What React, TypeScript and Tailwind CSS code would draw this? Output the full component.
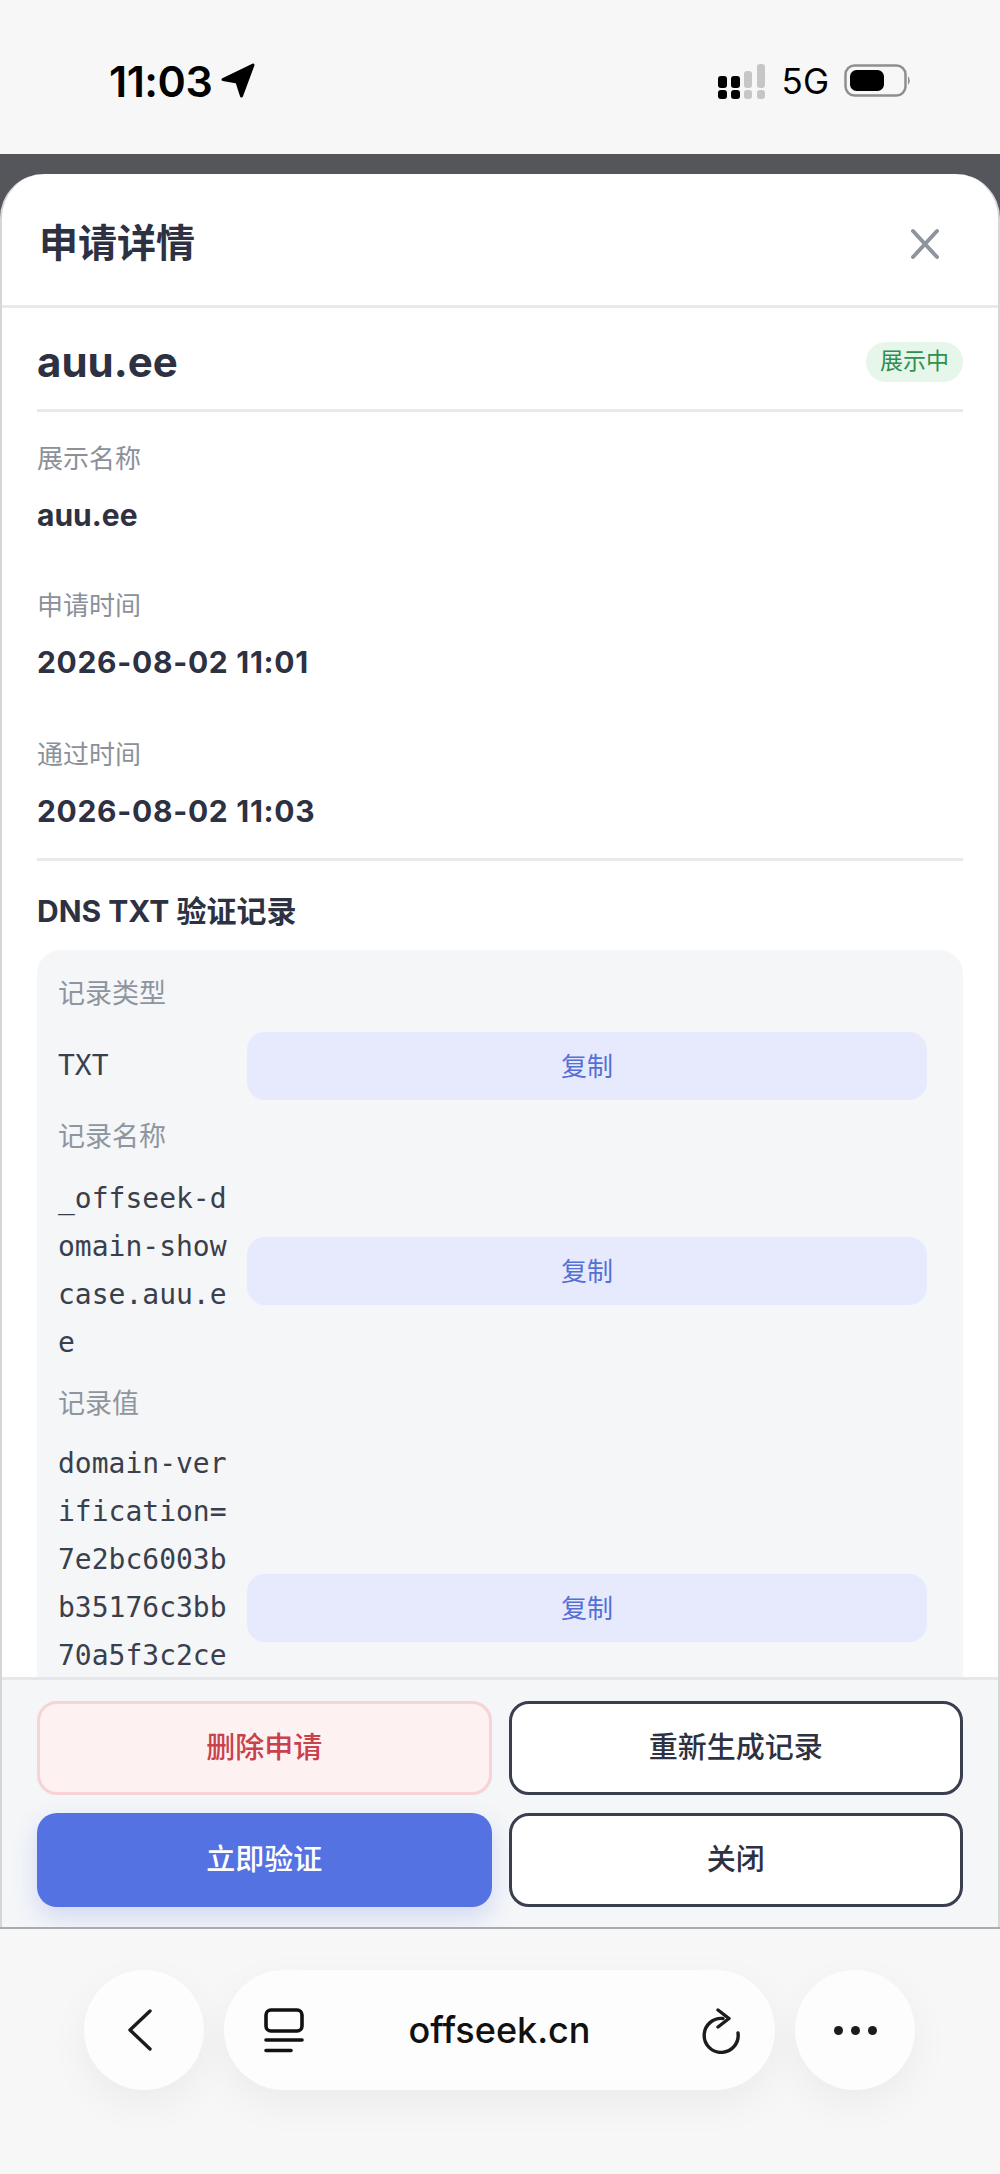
const SANS = "font-['Inter','Noto_Sans_CJK_SC',sans-serif]";

function Info({ label, value, cls, valueCls }: { label: string; value: string; cls: string; valueCls: string }) {
  return (
    <div className={cls}>
      <div className="text-[26px] leading-[36px] text-[#8b9099]">{label}</div>
      <div className={`mt-[20px] text-[30px] leading-[36px] font-bold text-[#2d3142] ${valueCls}`}>{value}</div>
    </div>
  );
}

function RecordRow({ label, lines, rowCls, minH }: { label: string; lines: string[]; rowCls: string; minH: string }) {
  return (
    <div>
      <div className="text-[27px] leading-[36px] text-[#8f959e]">{label}</div>
      <div className={`flex items-center ${rowCls}`}>
        <div className={`w-[189px] shrink-0 font-['DejaVu_Sans_Mono',monospace] text-[28px] leading-[48px] text-[#3a3f4d] ${minH}`}>
          {lines.map((l) => (
            <div key={l}>{l}</div>
          ))}
        </div>
        <button className="h-[68px] w-[680px] rounded-[18px] bg-[#e7eafd] text-[26px] text-[#5470d6]">复制</button>
      </div>
    </div>
  );
}

export default function App() {
  return (
    <div className={`flex h-[2174px] w-[1000px] flex-col overflow-hidden bg-[#f7f7f7] ${SANS}`}>
      {/* status bar */}
      <div className="flex h-[154px] shrink-0 items-start justify-between pt-[56px] pl-[109px] pr-[88px]">
        <div className="flex items-center gap-[8px]">
          <span className="font-['Inter',sans-serif] text-[43px] leading-[50px] font-semibold tracking-[-0.5px] text-black">11:03</span>
          <svg width="36" height="36" viewBox="0 0 36 36" className="-mt-[2px]">
            <path d="M33 3 L3 17.5 L17 20 L21.5 34 Z" fill="#000" stroke="#000" strokeWidth="3" strokeLinejoin="round" />
          </svg>
        </div>
        <div className="flex items-center pt-[5px]">
          <svg width="50" height="36" viewBox="0 0 50 36">
            <rect x="1" y="13" width="9" height="12" rx="3" fill="#000" />
            <rect x="14" y="13" width="9" height="12" rx="3" fill="#000" />
            <rect x="1" y="27" width="9" height="9" rx="3" fill="#000" />
            <rect x="14" y="27" width="9" height="9" rx="3" fill="#000" />
            <rect x="27" y="8" width="8" height="17" rx="3" fill="#c6c6c6" />
            <rect x="40" y="1" width="8" height="24" rx="3" fill="#c6c6c6" />
            <rect x="27" y="27" width="8" height="9" rx="3" fill="#c6c6c6" />
            <rect x="40" y="27" width="8" height="9" rx="3" fill="#c6c6c6" />
          </svg>
          <span className="ml-[15px] font-['Inter',sans-serif] text-[35px] leading-[40px] font-normal text-black">5G</span>
          <svg width="68" height="34" viewBox="0 0 68 34" className="ml-[15px]">
            <rect x="1.5" y="1.5" width="60" height="30" rx="9" fill="none" stroke="#8f8f8f" strokeWidth="2.5" />
            <rect x="6" y="6" width="34" height="21" rx="6.5" fill="#000" />
            <path d="M64 12 Q67.5 16.5 64 21 Z" fill="#8f8f8f" />
          </svg>
        </div>
      </div>

      {/* overlay + sheet */}
      <div className="flex min-h-0 flex-1 flex-col border-b-2 border-[#a9abb0] bg-[#54565c] pt-[20px]">
        <div className="flex min-h-0 flex-1 flex-col overflow-hidden rounded-t-[44px] border-x-2 border-[#d6d6d8] bg-white">
          <div className="flex h-[134px] shrink-0 items-center justify-between border-b-[3px] border-[#e8e9ec] pl-[37px] pr-[37px] pt-[6px]">
            <h2 className="text-[39px] leading-[48px] font-semibold text-[#2d3142]">申请详情</h2>
            <svg width="36" height="36" viewBox="0 0 36 36" className="mr-[18px] mt-[3px]">
              <path d="M6 5 L30 31 M30 5 L6 31" stroke="#8f959f" strokeWidth="4" strokeLinecap="round" fill="none" />
            </svg>
          </div>

          <div className="min-h-0 flex-1 overflow-hidden px-[35px]">
            <div className="flex h-[104px] items-center justify-between border-b-[3px] border-[#e8e9ec] pt-[6px]">
              <div className="text-[42px] leading-[50px] font-bold text-[#2d3142]">auu.ee</div>
              <div className="flex h-[40px] w-[97px] items-center justify-center rounded-full bg-[#e6f6ea] text-[23px] text-[#2f8f4e]">展示中</div>
            </div>
            <Info cls="pt-[29px]" valueCls="" label="展示名称" value="auu.ee" />
            <Info cls="pt-[55px]" valueCls="tracking-[0.7px]" label="申请时间" value="2026-08-02 11:01" />
            <Info cls="pt-[57px]" valueCls="tracking-[0.7px]" label="通过时间" value="2026-08-02 11:03" />
            <div className="mt-[29px] border-t-[3px] border-[#e8e9ec] pt-[31px]">
              <div className="text-[30px] leading-[38px] font-bold text-[#2d3142]">DNS TXT 验证记录</div>
              <div className="mt-[20px] rounded-[24px] bg-[#f4f6f8] px-[21px] pt-[26px] pb-[24px]">
                <RecordRow label="记录类型" lines={["TXT"]} rowCls="mt-[20px]" minH="" />
                <div className="mt-[19px]">
                  <RecordRow label="记录名称" lines={["_offseek-d", "omain-show", "case.auu.e", "e"]} rowCls="mt-[20px]" minH="" />
                </div>
                <div className="mt-[19px]">
                  <RecordRow
                    label="记录值"
                    lines={["domain-ver", "ification=", "7e2bc6003b", "b35176c3bb", "70a5f3c2ce"]}
                    rowCls="mt-[18px]"
                    minH="min-h-[336px]"
                  />
                </div>
              </div>
            </div>
          </div>

          <div className="grid shrink-0 grid-cols-2 gap-x-[17px] gap-y-[18px] border-t-[3px] border-[#e5e7ea] bg-[#f4f6f8] px-[35px] pt-[21px] pb-[20px]">
            <button className="h-[94px] rounded-[20px] border-[3px] border-[#f7d3d6] bg-[#fef1f2] text-[29px] font-medium text-[#c8414b]">删除申请</button>
            <button className="h-[94px] rounded-[20px] border-[3px] border-[#3a3f4f] bg-white text-[29px] font-medium text-[#2d3142]">重新生成记录</button>
            <button className="h-[94px] rounded-[20px] bg-[#5572e2] text-[29px] font-medium text-white shadow-[0_10px_24px_rgba(85,114,226,0.22)]">立即验证</button>
            <button className="h-[94px] rounded-[20px] border-[3px] border-[#3a3f4f] bg-white text-[29px] font-medium text-[#2d3142]">关闭</button>
          </div>
        </div>
      </div>

      {/* browser bar */}
      <div className="flex h-[245px] shrink-0 items-start justify-center gap-[20px] pt-[41px] pr-[1px]">
        <div className="flex h-[120px] w-[120px] items-center justify-center rounded-full bg-[#fdfdfd] shadow-[0_14px_40px_rgba(0,0,0,0.05)]">
          <svg width="28" height="44" viewBox="0 0 28 44" className="-ml-[9px]">
            <path d="M24 3 L4 22 L24 41" stroke="#1c1c1e" strokeWidth="3.4" strokeLinecap="round" strokeLinejoin="round" fill="none" />
          </svg>
        </div>
        <div className="flex h-[120px] w-[551px] items-center rounded-full bg-[#fdfdfd] pl-[40px] pr-[34px] shadow-[0_14px_40px_rgba(0,0,0,0.05)]">
          <svg width="40" height="46" viewBox="0 0 40 46" className="mt-[2px]">
            <rect x="2" y="2" width="36" height="21" rx="5" fill="none" stroke="#111" strokeWidth="3.6" />
            <path d="M2 32 H38 M2 42.5 H27" stroke="#111" strokeWidth="3.6" strokeLinecap="round" />
          </svg>
          <div className="flex-1 pr-[6px] text-center font-['Inter',sans-serif] text-[36px] leading-[44px] font-medium text-[#111]">offseek.cn</div>
          <svg width="40" height="46" viewBox="0 0 40 46" className="mt-[2px]">
            <path d="M22 10.5 A17 17 0 1 0 37 25" stroke="#1c1c1e" strokeWidth="3.4" strokeLinecap="round" fill="none" />
            <path d="M17 2 L28 10.5 L17 19" stroke="#1c1c1e" strokeWidth="3.4" strokeLinecap="round" strokeLinejoin="round" fill="none" />
          </svg>
        </div>
        <div className="flex h-[120px] w-[120px] items-center justify-center gap-[8px] rounded-full bg-[#fdfdfd] shadow-[0_14px_40px_rgba(0,0,0,0.05)]">
          <span className="h-[9px] w-[9px] rounded-full bg-[#1c1c1e]" />
          <span className="h-[9px] w-[9px] rounded-full bg-[#1c1c1e]" />
          <span className="h-[9px] w-[9px] rounded-full bg-[#1c1c1e]" />
        </div>
      </div>
    </div>
  );
}
